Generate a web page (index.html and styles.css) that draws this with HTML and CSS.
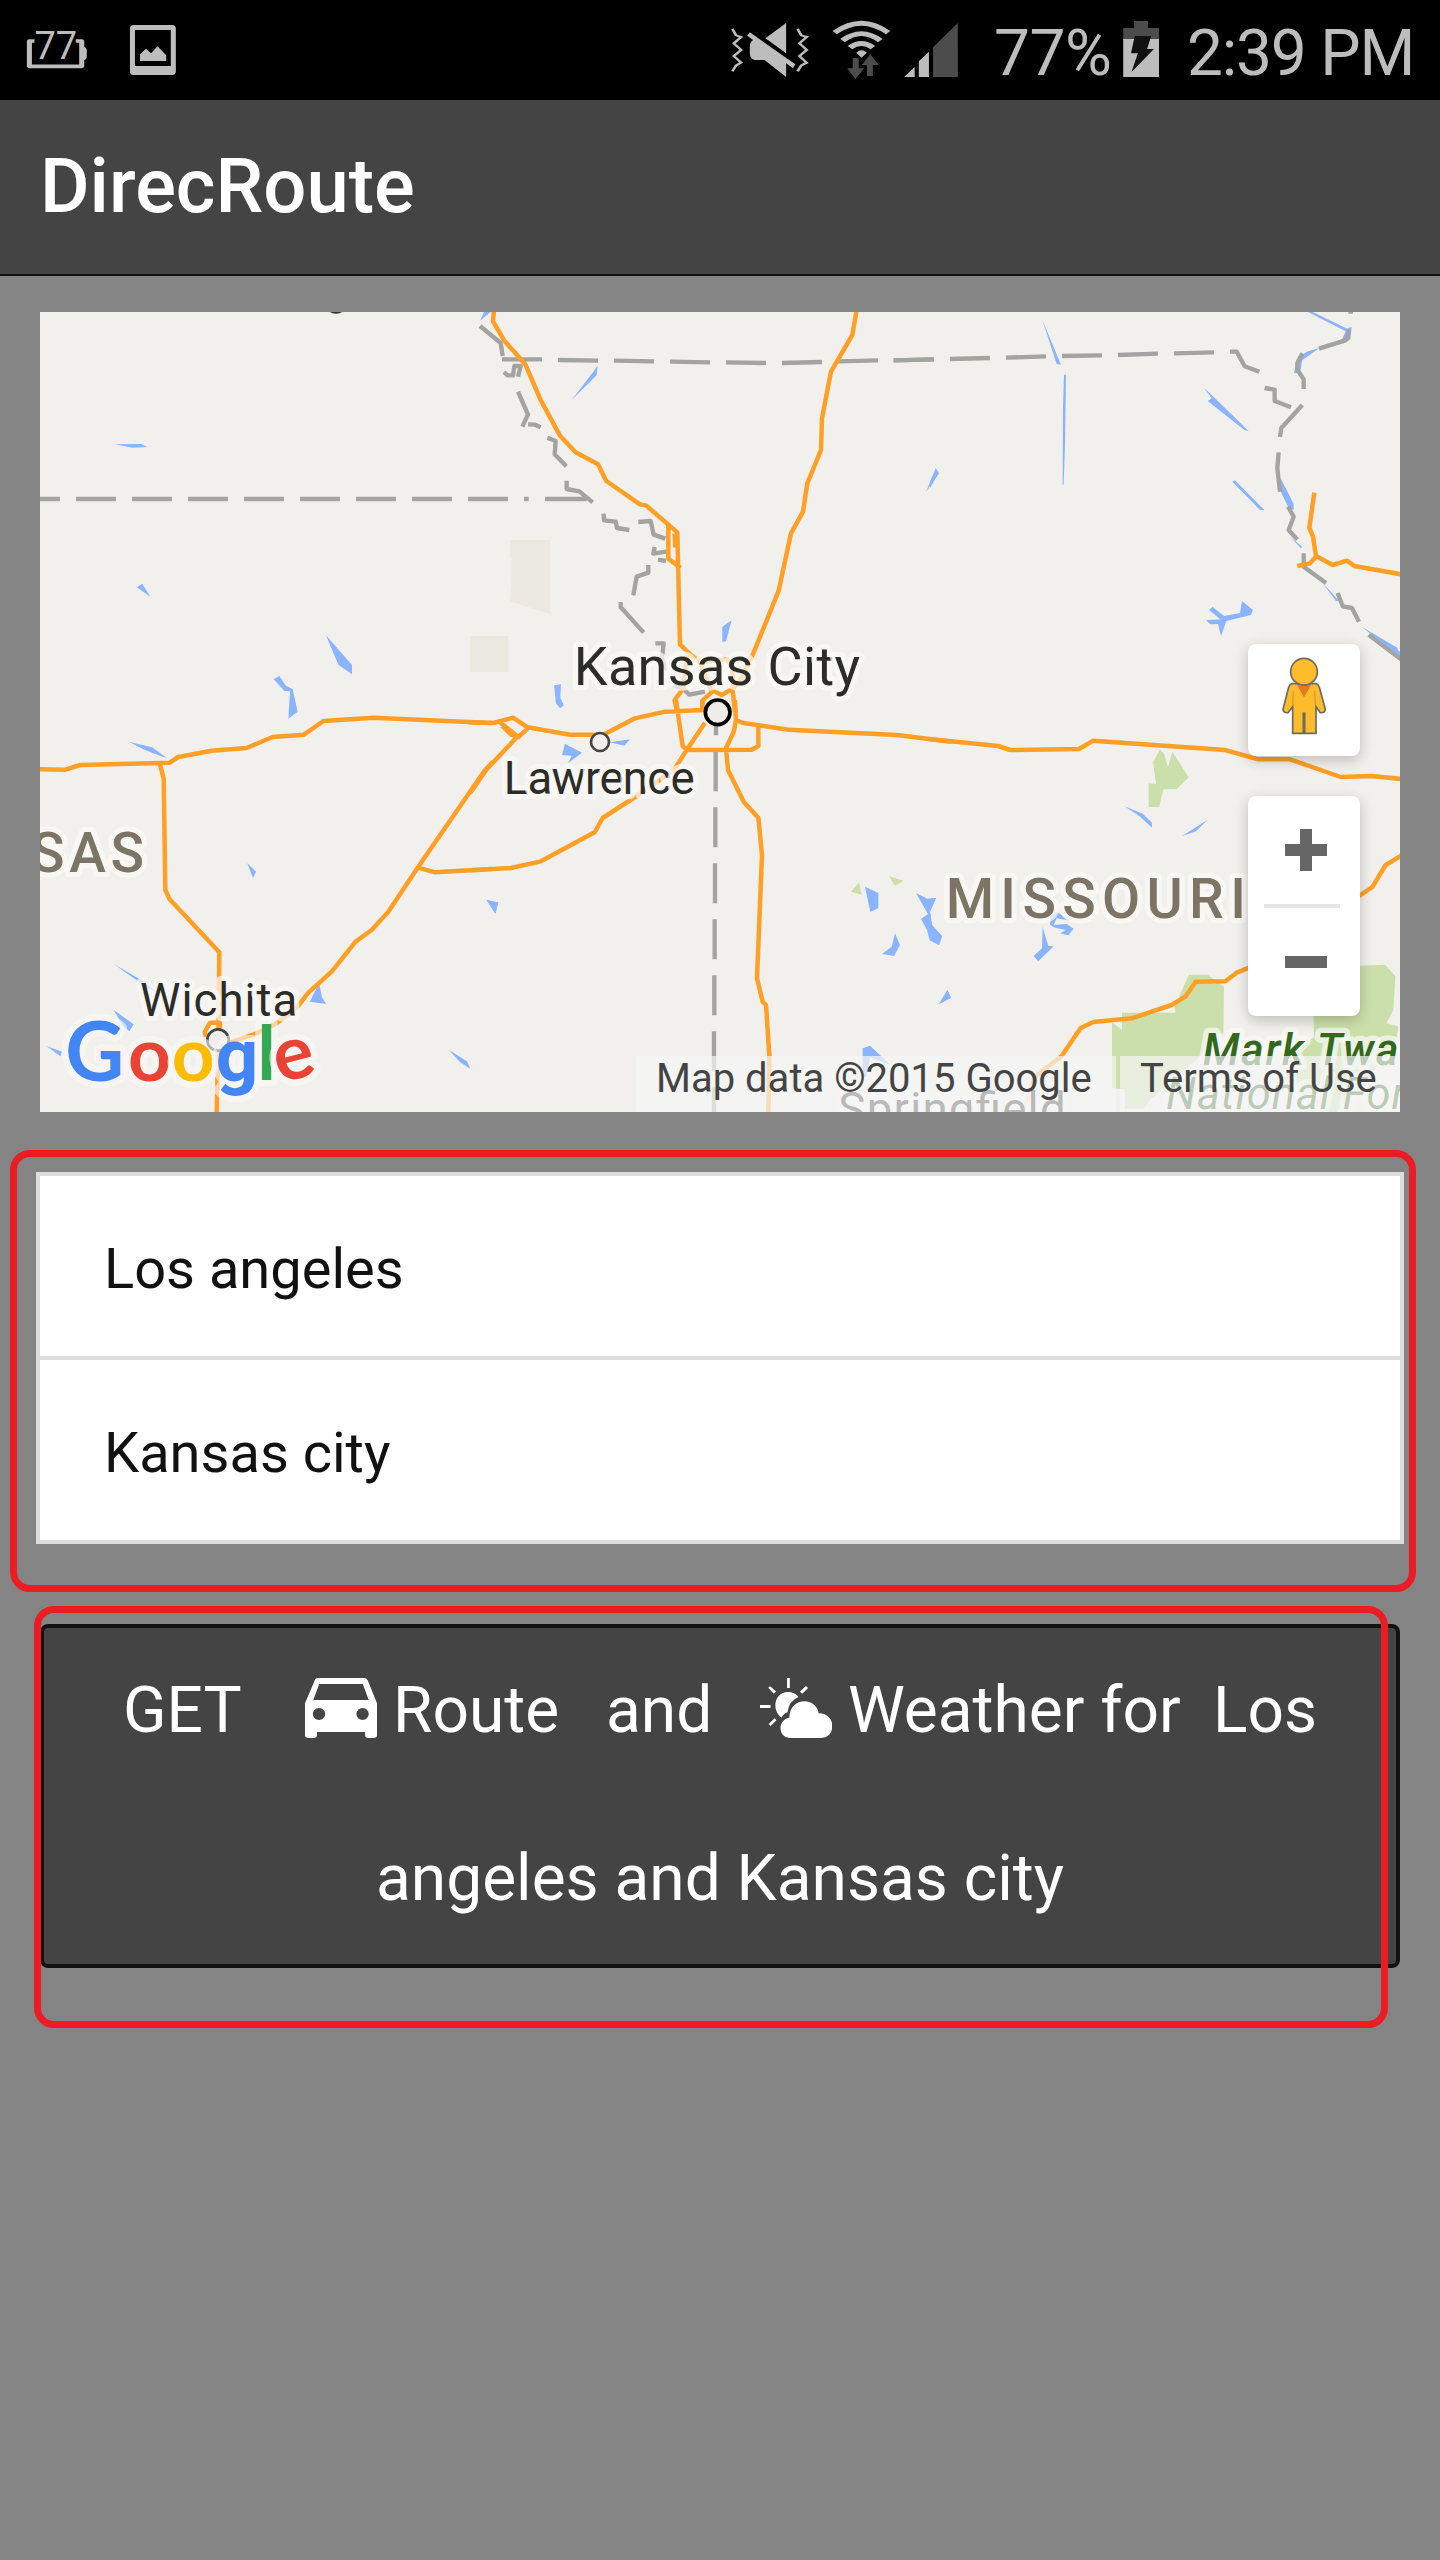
FILE: index.html
```html
<!DOCTYPE html>
<html lang="en">
<head>
<meta charset="utf-8">
<title>DirecRoute</title>
<link rel="stylesheet" href="styles.css">
</head>
<body>
<div class="status">
  <svg class="ico-level" viewBox="0 0 217.8 300" preserveAspectRatio="none">
    <path class="light-line" d="M75 123H64V199H178V123H165"/>
    <path class="light" d="M182 140Q189 143 189 150V170Q189 178 182 181Z"/>
    <text class="level-text" transform="translate(75 176) scale(.726 1)">77</text>
  </svg>
  <svg class="ico-photo" viewBox="217.8 0 217.8 300" preserveAspectRatio="none">
    <path class="light" fill-rule="evenodd" d="M291 75H375Q383 75 383 86V214Q383 225 375 225H291Q283 225 283 214V86Q283 75 291 75ZM294 90V198H372V90Z"/>
    <path class="light" d="M305 183V163L318 146L329 160L343 139L362 166V183Z"/>
  </svg>
  <div class="status-right">
    <svg class="ico-mute" viewBox="0 0 217.8 300" preserveAspectRatio="none">
      <path class="buzz" d="M27 87L35 106L46 111L30 130L46 150L30 168L46 188L35 196L27 214M169 87L177 106L189 111L173 130L189 150L173 168L189 188L177 196L169 214"/>
      <path class="light" d="M144 69V160L99 115ZM65 97L164 193L159 205L144 190V231L97 180H76Q65 178 65 160V140Q65 126 72 120L59 107Z"/>
    </svg>
    <svg class="ico-wifi" viewBox="217.8 0 174.2 300" preserveAspectRatio="none">
      <path class="wave" d="M250 98Q308 42 366 98M267 122Q308 80 349 122M283 143Q308 118 333 143"/>
      <path class="light" d="M297 158Q308 144 320 158L308 173Z"/>
      <path class="dim" d="M289 174H302V205H314L295 237L277 205H289ZM320 228V195H309L327 163L346 195H333V228Z"/>
    </svg>
    <svg class="ico-signal" viewBox="392 0 152.5 300" preserveAspectRatio="none">
      <path class="light" d="M401 231L424 201V231ZM433 231V184L455 155V231Z"/>
      <path class="dim" d="M464 231V142L518 69V231Z"/>
    </svg>
    <span class="percent">77%</span>
    <svg class="ico-battery" viewBox="871 0 98 300" preserveAspectRatio="none">
      <path class="dim" d="M902 63H932V84H956V120H878V84H902Z"/>
      <path class="light" d="M878 117H956V231H878Z"/>
      <path class="bolt" d="M903 108H939L930 147H945L896 216L910 160H895Z"/>
    </svg>
    <span class="clock">2:39 PM</span>
  </div>
</div>

<header class="header"><h1 class="title">DirecRoute</h1></header>

<main class="content">
  <section class="map">
    <svg class="map-canvas" viewBox="120 936 4080 2400">
      <!-- north west -->
      <g transform="translate(90 900)">
        <path class="urban" d="M1320 1008H1435V1116H1320Z"/>
        <path class="water" d="M255 433L333 432L352 441L308 443ZM320 862L337 851L361 890ZM888 1006L966 1095V1123L925 1094ZM731 1138L748 1128L768 1157L788 1167L803 1235L775 1256L780 1174L763 1173Z"/>
        <path class="border" d="M30 597H90M138 597H258M306 597H426M474 597H594M642 597H762M810 597H930M978 597H1098M1146 597H1266M1314 597H1434"/>
        <path class="ink" d="M895 34Q918 48 941 34Z"/>
      </g>
      <!-- north -->
      <g transform="translate(1410 900)">
        <path class="urban" d="M120 720H240V942L120 904L125 840V775H120Z"/>
        <path class="water" d="M30 62L42 36H62ZM305 300L370 215L383 196L380 226ZM1368 576L1397 505L1407 520ZM757 1026V980L785 961L768 1024ZM252 1156L273 1153L271 1195L281 1216L270 1224L258 1209Z"/>
        <path class="border" d="M30 78L92 129L98 168M96 178H216M264 180L384 182M432 182L552 184M600 185L720 187M768 187L888 189M936 189L1056 186M1104 184L1224 181M1272 181L1392 178M102 216L112 226H129L133 198H152L144 230M144 275L174 344L157 380M174 373L195 374L212 382M232 413L257 423L254 463L289 499M290 542V567L328 574L368 607M225 597H350M162 597H176M401 641L402 661L437 665L441 684L478 690M505 666L542 663L551 704L586 716M554 741L550 761L588 755M564 779L588 783M535 795V818L500 830L490 886M452 906V921L521 998M556 1030H581L576 1075L590 1110M610 1157L640 1166L658 1184L705 1175"/>
        <path class="road" d="M72 30L69 64L103 122L166 193L212 300L270 407L317 457L384 493L409 543L510 613L529 617L622 697L630 1033L663 1065L690 1085L770 1078L787 1100L790 1160M595 677V776L632 804M614 700L616 742M1160 30L1147 105L1083 215L1056 355L1053 450L1012 550L999 635L963 700L926 872L850 1060L815 1135L790 1165L755 1185L730 1172L697 1202V1235M650 1065L640 1165L614 1200L620 1230M690 1085L725 1175M787 1160L795 1235"/>
      </g>
      <!-- north east -->
      <g transform="translate(2790 900)">
        <path class="water" d="M337 60L393 194L380 192ZM402 224H408L405 435L401 554L398 553L399 320ZM822 263L855 295L956 393L943 390L833 303L845 295ZM907 545L915 541L1003 630H990ZM1130 34L1148 36L1252 86L1265 80L1263 102L1250 122L1236 118L1247 94ZM1100 178L1130 155L1170 143L1117 180L1110 218L1092 220ZM1052 535L1091 612V630L1076 624L1050 570ZM1080 710L1117 740L1113 745ZM1175 845L1228 904L1218 903ZM1295 980L1402 1043L1410 1070ZM1330 1000L1410 1055V1068ZM828 961L871 958L837 930L848 921L882 948L930 939L936 903L969 930L963 945L889 963L873 1008L864 972L841 973ZM0 545L18 506L26 520L0 564Z"/>
        <path class="border" d="M-110 181L12 178M60 177L180 174M228 173L348 169M396 168L516 166M564 165L684 161M732 160L852 157M900 155H920L944 199L988 215M1004 264L1034 269V303L1083 322M1117 315L1054 384L1050 411M1046 457L1042 505L1050 575M1074 620L1091 650L1076 690L1102 719M1121 760V800L1188 849M1223 879L1238 919L1266 924L1287 965M1316 1004L1414 1079M1255 88V114L1246 121L1167 146M1117 160L1102 190V209L1121 238V267M1255 35H1269"/>
        <path class="road" d="M1153 578L1138 683L1149 710L1158 768L1208 795L1251 782L1273 798L1414 823M1102 798L1140 790L1158 770"/>
      </g>
      <!-- south west -->
      <g transform="translate(90 2100)">
        <path class="water" d="M296 125L366 142L411 174L398 170L343 149ZM652 490L678 515L669 534ZM251 792L330 838L385 880L340 855ZM250 929L311 973L298 994L280 978ZM49 1038L96 1055L91 1069ZM867 850L876 892L888 912L839 905ZM1257 1050L1311 1084L1321 1106L1290 1087ZM1370 600L1405 608L1395 640Z"/>
        <path class="road" d="M24 208L106 209L151 195L419 188L445 171L545 152L650 144L728 111L822 104L880 63L1030 53L1385 69M389 190L401 235L406 570L419 598L568 757L566 960L560 1240M528 1010L524 996L540 968H570V985M600 1028L680 1000L740 970L803 920L835 878L905 815L977 725L1025 690L1075 635L1165 500L1365 210L1390 185M1165 503L1215 517L1385 507"/>
      </g>
      <!-- south -->
      <g transform="translate(1410 2100)">
        <path class="park" d="M1143 575L1167 547L1175 584ZM1257 529L1301 542L1275 557Z"/>
        <path class="water" d="M257 -5L271 -5L281 16L270 24L258 9ZM50 600L84 607L77 642ZM285 131L336 158L294 190L305 167L276 165ZM420 127L480 118L463 137ZM1185 560L1225 579V625L1201 636ZM1338 579L1372 596L1398 594L1380 635L1386 675L1416 709L1407 735L1379 721L1371 690L1353 656L1374 643ZM1275 700L1290 735L1272 768L1236 762L1265 740ZM1408 912L1432 870L1443 893ZM1178 1130V1045L1200 1037L1262 1095L1200 1072L1188 1130Z"/>
        <path class="border" d="M738 75V106M737 154V274M736 322V442M735 490V610M734 658V778M733 826V946M732 994V1114M732 1162V1240"/>
        <path class="road" d="M-5 67L70 69L129 53L173 82L300 104H400L495 55L585 35L700 30M90 67L145 111L173 86M96 77L123 104L143 109L50 208L0 280M618 0L638 138L650 150L845 149L865 138V78M705 68L650 150L612 210L505 285L398 354L374 397L210 485L122 504L0 511M795 0L798 60L820 69L955 89L1280 105L1445 125M798 60L791 96L768 144L774 210L822 307L865 353L876 465L861 835L878 905L888 915L898 1065L895 1240M697 0V30"/>
      </g>
      <!-- south east -->
      <g transform="translate(2790 2100)">
        <path class="park" d="M690 149L702 161L714 202L727 155L776 232L740 268H700L688 321H656V250L678 252L669 186ZM546 967L576 990V938H737L733 920L777 824H833L882 860L880 1000L850 1005L810 1069L660 1200L640 1226H585V1168L546 1165ZM1150 950L1290 797L1365 794L1396 828L1390 930L1369 970L1405 979L1395 1050L1350 1090L1220 1236H1160L1100 1170V1060L1152 1010Z"/>
        <path class="water" d="M582 318L638 341L666 368V383L628 348ZM755 409L833 359L798 394ZM338 680L347 712L355 738L371 739L325 784L311 768L336 745ZM27 912L52 870L63 893ZM360 675L362 648L380 635L420 662L380 655L371 675L410 672L431 686L415 706L390 700L407 690L375 683ZM0 596L18 594L0 635L6 675L36 709L27 735L0 721Z"/>
        <path class="road" d="M-5 117L205 138L240 150L447 147L490 122L885 150L985 178H1080L1232 231L1325 228L1414 237M1270 600L1327 561L1367 495L1414 467M280 1240L315 1130L395 1068L452 984L490 966L605 955L725 915L766 890L797 845L886 844L920 818L965 800"/>
      </g>
      <!-- place labels -->
      <g class="labels">
        <g transform="translate(90 2100)">
          <text class="state" x="3" y="515">SAS</text>
          <circle class="town" cx="564" cy="1020" r="32"/>
          <text class="place small" x="330" y="948" textLength="472">Wichita</text>
        </g>
        <g transform="translate(1410 2100)">
          <circle class="capital" cx="743" cy="37" r="37"/>
          <circle class="town" cx="390" cy="126" r="27"/>
          <text class="place" x="311" y="-44" textLength="859">Kansas City</text>
          <text class="place small" x="101" y="281" textLength="573">Lawrence</text>
          <text class="place small" x="1105" y="1276" textLength="682">Springfield</text>
        </g>
        <g transform="translate(2790 2100)">
          <text class="state wide" x="47" y="653">MISSOURI</text>
          <text class="forest" x="818" y="1095">Mark Twa</text>
          <text class="forest faint" x="708" y="1228">National For</text>
        </g>
      </g>
      <g class="logo" transform="translate(90 2100)">
        <text class="logo-text" y="1142"><tspan class="g-blue" x="106" font-size="244">G</tspan><tspan class="g-red" x="294">o</tspan><tspan class="g-yellow" x="425">o</tspan><tspan class="g-blue g-round" x="557">g</tspan><tspan class="g-green" x="682" y="1139">l</tspan><tspan class="g-red" x="748" y="1150" rotate="-14">e</tspan></text>
      </g>
    </svg>
    <div class="controls">
      <div class="control">
        <svg class="pegman" viewBox="954 1032 336 336">
          <path class="peg-body" d="M1086 1151H1158Q1165 1153 1168 1162L1186 1228Q1184 1240 1171 1238L1158 1220V1300H1088V1220L1074 1238Q1061 1240 1059 1228L1076 1162Q1079 1153 1086 1151Z"/>
          <path class="peg-line" d="M1122 1237V1300"/>
          <path class="peg-fold" d="M1088 1216L1090 1172M1156 1216L1154 1172"/>
          <path class="peg-neck" d="M1101 1154H1144L1122 1192Z"/>
          <circle class="peg-body" cx="1122" cy="1115" r="40"/>
        </svg>
      </div>
      <div class="control zoomer">
        <svg class="sign" viewBox="0 0 42 42"><path d="M15 0H27V15H42V27H27V42H15V27H0V15H15Z"/></svg>
        <div class="rule"></div>
        <svg class="sign" viewBox="0 0 42 42"><path d="M0 15H42V27H0Z"/></svg>
      </div>
    </div>
    <div class="credits"><span class="credit data">Map data ©2015 Google</span><span class="credit terms">Terms of Use</span></div>
  </section>

  <section class="list">
    <div class="item">Los angeles</div>
    <div class="item">Kansas city</div>
    <div class="callout callout-list"></div>
  </section>

  <section class="action">
    <div class="button">
      <div class="line">
        <span class="word get">GET</span>
        <svg class="car" viewBox="664 264 157 180" preserveAspectRatio="none">
          <path fill-rule="evenodd" d="M692 264H793Q800 265 802 275L821 340V436Q821 444 813 444H803Q795 444 795 436V426H690V436Q690 444 682 444H672Q664 444 664 436V340L684 275Q686 265 692 264ZM695 282L682 330H803L790 282ZM681 372A13.500 18 0 1 0 708 372A13.500 18 0 1 0 681 372ZM776 372A13.500 18 0 1 0 803 372A13.500 18 0 1 0 776 372Z"/>
        </svg>
        <span class="word route">Route</span>
        <span class="word and">and</span>
        <svg class="weather" viewBox="87 264 157 180" preserveAspectRatio="none">
          <path d="M146 264H152V294H146ZM87 345H110V354H87ZM105 293L109 289L122 304L117 311ZM187 288L192 294L179 311L174 305ZM119 385L123 391L110 408L106 402ZM134 383C112 362 117 307 148 306Q162 306 171 321Q150 332 147 367Q139 370 134 383ZM152 444C126 442 124 390 151 383C152 320 209 320 215 370C254 370 254 444 219 444Z"/>
        </svg>
        <span class="word for">Weather for</span>
        <span class="word los">Los</span>
      </div>
      <div class="line second">angeles and Kansas city</div>
    </div>
    <div class="callout callout-action"></div>
  </section>
</main>
</body>
</html>
```
FILE: styles.css
```css
* { box-sizing: border-box; }
body {
  margin: 0;
  width: 1440px;
  height: 2560px;
  overflow: hidden;
  background: #848484;
  font-family: Roboto, "Liberation Sans", sans-serif;
}
svg { display: block; flex: none; }

/* status bar */
.status {
  display: flex;
  height: 100px;
  background: #000;
  color: #bdbdbd;
  font-size: 64px;
  line-height: 107px;
}
.status svg { height: 100px; }
.status-right { display: flex; margin-left: auto; width: 720px; white-space: nowrap; }
.ico-level, .ico-photo, .ico-mute { width: 100px; }
.ico-wifi { width: 80px; }
.ico-signal { width: 70px; }
.ico-battery { width: 45px; }
.percent { width: 150px; padding-left: 24px; letter-spacing: -.500px; }
.clock { padding-left: 22px; letter-spacing: -1.200px; }
.light { fill: #bdbdbd; }
.dim { fill: #4c4c4c; }
.bolt { fill: #111; }
.light-line { fill: none; stroke: #bdbdbd; stroke-width: 11; stroke-linejoin: round; }
.buzz { fill: none; stroke: #bdbdbd; stroke-width: 6; }
.wave { fill: none; stroke: #bdbdbd; stroke-width: 14; }
.level-text { fill: #bdbdbd; font-size: 114px; font-weight: 400; }

/* title bar */
.header {
  display: flex;
  align-items: center;
  height: 176px;
  padding: 0 40px;
  background: #444;
  border-bottom: 2px solid #111;
}
.title { margin: 0 0 2px; color: #fff; font-size: 76px; font-weight: 500; line-height: 90px; }

.content { display: flex; flex-direction: column; padding: 36px; }

/* map */
.map { position: relative; height: 800px; margin: 0 4px; overflow: hidden; background: #f2f0ec; }
.map-canvas { width: 1360px; height: 800px; }
.road { fill: none; stroke: #ff9f26; stroke-width: 13.500; stroke-linejoin: round; }
.border { fill: none; stroke: #a3a3a1; stroke-width: 13; stroke-linejoin: round; }
.water { fill: #8ab4ff; }
.park { fill: #cbdfaa; }
.urban { fill: #ebe8e0; }
.ink { fill: #333; }
.labels text { paint-order: stroke; stroke: rgba(250, 249, 247, .72); stroke-width: 32; stroke-linejoin: round; }
.place { fill: #2c2d29; font-size: 162px; }
.place.small { font-size: 137px; }
.state { fill: #7c7565; font-size: 166px; font-weight: 500; letter-spacing: 14px; }
.state.wide { letter-spacing: 19px; }
.labels .forest { fill: #33691e; font-size: 130px; font-style: italic; font-weight: 500; letter-spacing: 5px; }
.labels .faint { font-weight: 400; letter-spacing: 3px; }
.town { fill: #eeedeb; stroke: #454543; stroke-width: 8; }
.capital { fill: #eeedea; stroke: #000; stroke-width: 11; }
.logo-text {
  font-family: Lato, sans-serif;
  font-size: 225px;
  font-weight: 700;
  paint-order: stroke;
  stroke: rgba(250, 249, 247, .6);
  stroke-width: 40;
  stroke-linejoin: round;
}
.g-blue { fill: #4285f4; }
.g-red { fill: #ea4335; }
.g-yellow { fill: #fbbc05; }
.g-green { fill: #34a853; }
.g-round { font-family: Roboto, sans-serif; font-size: 224px; }

.controls { position: absolute; top: 332px; right: 40px; display: flex; flex-direction: column; gap: 40px; }
.control { width: 112px; height: 112px; border-radius: 8px; background: #fff; box-shadow: 0 4px 14px rgba(0, 0, 0, .22); }
.pegman { width: 112px; height: 112px; }
.peg-body { fill: #fcbc2c; stroke: #6b6b60; stroke-width: 5; }
.peg-line { fill: none; stroke: #6b6b60; stroke-width: 9; }
.peg-fold { fill: none; stroke: #e9962a; stroke-width: 4; }
.peg-neck { fill: #e37d1b; }
.zoomer { display: flex; flex-direction: column; align-items: center; height: 220px; padding: 33px 0 0 4px; }
.sign { width: 42px; height: 42px; fill: #666; }
.rule { width: 76px; height: 4px; margin: 33px 8px 33px 0; background: #e6e6e6; }
.credits { position: absolute; right: 0; bottom: 0; display: flex; gap: 4px; }
.credit {
  height: 56px;
  padding-left: 20px;
  background: rgba(245, 245, 245, .7);
  color: #444;
  font-size: 40px;
  line-height: 46px;
  white-space: nowrap;
}
.data { width: 480px; }
.terms { width: 280px; }

/* endpoints */
.list { position: relative; height: 372px; margin-top: 60px; border: 4px solid #ddd; background: #fff; }
.item { height: 180px; padding-left: 64px; color: #111; font-size: 56px; line-height: 186px; }
.item + .item { height: 184px; border-top: 4px solid #ddd; }

/* button */
.action { position: relative; margin: 80px 4px 0; }
.button { height: 344px; border: 4px solid #111; border-radius: 8px; background: #444; color: #fff; font-size: 64px; }
.line { display: flex; height: 168px; line-height: 166px; white-space: nowrap; }
.second { justify-content: center; }
.get { margin-left: 79px; width: 182px; }
.car, .weather { width: 72px; height: 60px; margin-top: 50px; fill: #fff; }
.route { margin-left: 16px; width: 213px; }
.and { width: 154px; }
.for { margin-left: 16px; width: 365px; }

/* highlight frames drawn over the screen */
.callout { position: absolute; border: 7px solid #ed1c24; border-radius: 20px; }
.callout-list { left: -30px; top: -26px; width: 1406px; height: 442px; }
.callout-action { left: -6px; top: -18px; width: 1354px; height: 422px; }
```
